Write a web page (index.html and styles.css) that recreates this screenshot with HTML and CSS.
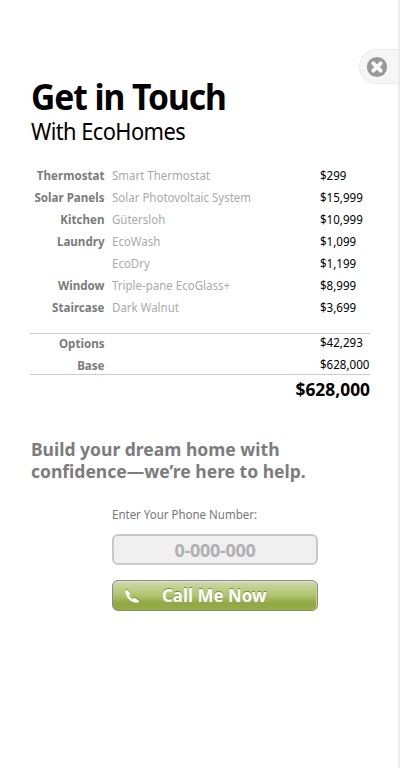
FILE: index.html
```html
<!DOCTYPE html>
<html lang="en">
<head>
<meta charset="utf-8">
<title>Get in Touch</title>
<link rel="stylesheet" href="styles.css">
</head>
<body>
<main class="panel">
  <button class="close" aria-label="Close">
    <svg width="22" height="22" viewBox="0 0 22 22"><circle cx="11" cy="11" r="10.1" fill="#999"/><path d="M7.3 7.3l7.4 7.4M14.7 7.3l-7.4 7.4" stroke="#fafafa" stroke-width="3.8" stroke-linecap="round"/></svg>
  </button>
  <h1 class="title">Get in Touch</h1>
  <p class="subtitle">With EcoHomes</p>
  <dl class="rows">
    <div class="row"><dt>Thermostat</dt><dd class="item">Smart Thermostat</dd><dd class="price">$299</dd></div>
    <div class="row"><dt>Solar Panels</dt><dd class="item">Solar Photovoltaic System</dd><dd class="price">$15,999</dd></div>
    <div class="row"><dt>Kitchen</dt><dd class="item">Gütersloh</dd><dd class="price">$10,999</dd></div>
    <div class="row"><dt>Laundry</dt><dd class="item">EcoWash</dd><dd class="price">$1,099</dd></div>
    <div class="row"><dt></dt><dd class="item">EcoDry</dd><dd class="price">$1,199</dd></div>
    <div class="row"><dt>Window</dt><dd class="item">Triple-pane EcoGlass+</dd><dd class="price">$8,999</dd></div>
    <div class="row"><dt>Staircase</dt><dd class="item">Dark Walnut</dd><dd class="price">$3,699</dd></div>
  </dl>
  <dl class="rows summary">
    <div class="row"><dt>Options</dt><dd class="item"></dd><dd class="price">$42,293</dd></div>
    <div class="row"><dt>Base</dt><dd class="item"></dd><dd class="price">$628,000</dd></div>
  </dl>
  <p class="total">$628,000</p>
  <p class="pitch"><span class="line">Build your dream home with</span><span class="line">confidence—we’re here to help.</span></p>
  <form class="form">
    <label class="label" for="phone">Enter Your Phone Number:</label>
    <input class="phone" id="phone" placeholder="0-000-000">
    <button class="call" type="button">
      <svg class="handset" width="16" height="16" viewBox="0 0 16 16" fill="none" stroke-linecap="round"><path d="M2.300 1.600L6 5" stroke="#768a42" stroke-width="1.500"/><path d="M10.200 9.500L14.500 12.200" stroke="#768a42" stroke-width="1.500"/><path d="M1.300 3.200C1.700 9 7 14.600 12.600 14.900C11 12.800 10.600 12.500 9.700 12C7 10.500 5.200 8.600 4.700 6.300Z" fill="#fff"/><path d="M2.500 3.300L5.100 5.700M10.400 11.200L13.500 13.300" stroke="#fff" stroke-width="2.600"/></svg>
      <span class="call-text">Call Me Now</span>
    </button>
  </form>
</main>
</body>
</html>
```
FILE: styles.css
```css
* { box-sizing: border-box; margin: 0; padding: 0; }
body { background: #fff; font-family: "Noto Sans", sans-serif; }
.panel { position: relative; width: 400px; height: 768px; padding: 76px 30px 0; overflow: hidden; border-right: 2px solid #ebebeb; background: #fff; }
.close { position: absolute; top: 49px; right: -2px; display: flex; align-items: center; width: 41px; height: 35px; padding: 0 0 0 6px; border: 1px solid #ebebeb; border-right: 0; border-radius: 18px 0 0 18px; background: #f6f6f6; }
.close svg { display: block; }
.title { height: 42px; padding-left: 1px; font-size: 36px; line-height: 42px; font-weight: 700; color: #000; letter-spacing: -1.1px; white-space: nowrap; transform: scaleX(.933); transform-origin: 0 0; }
.subtitle { height: 46px; padding-left: 1px; font-size: 23px; line-height: 26px; color: #000; letter-spacing: -.6px; white-space: nowrap; transform: scaleX(.95); transform-origin: 0 0; }
.rows { width: 340px; font-size: 12px; line-height: 24px; white-space: nowrap; }
.row { display: grid; grid-template-columns: 74.500px 208.500px 1fr; column-gap: 7px; height: 22px; }
.row .price { margin-left: -7px; color: #000; transform: scaleX(.965); transform-origin: 0 0; }
.row dt { display: flex; justify-content: flex-end; font-weight: 700; color: #7b7b7b; transform: scaleX(.965); transform-origin: 100% 0; }
.row .item { color: #aaa; transform: scaleX(.957); transform-origin: 0 0; }
.summary { height: 42px; margin-top: 15px; border-top: 1px solid #ccc; border-bottom: 1px solid #ccc; line-height: 20px; }
.summary .price { line-height: 18px; }
.total { width: 340px; text-align: right; font-size: 18px; line-height: 29px; font-weight: 700; color: #000; transform: scaleX(.965); transform-origin: 100% 0; }
.pitch { height: 64px; margin-top: 34px; padding-left: 1px; font-size: 18px; line-height: 22px; font-weight: 700; color: #7c7c7c; white-space: nowrap; transform: scaleX(.973); transform-origin: 0 0; }
.line { display: block; }
.form { display: flex; flex-direction: column; width: 206px; margin-left: 82px; }
.label { height: 32px; font-size: 12px; line-height: 26px; color: #777; transform: scaleX(.957); transform-origin: 0 0; }
.phone { height: 31px; border: 2px solid #c9c9c9; border-radius: 6px; background: #f0f0f0; text-align: center; font: 700 18px/27px "Noto Sans", sans-serif; letter-spacing: -.3px; }
.phone::placeholder { color: #b0b0b0; opacity: 1; }
.call { display: flex; align-items: center; height: 31px; margin-top: 15px; padding-left: 11px; border: 1px solid #8a8a86; border-radius: 6px; background: linear-gradient(#d0daaa, #b0c36c 50%, #93a844 75%, #94ab46); box-shadow: inset 0 1px #e0e7c8, inset -1px 0 #c8d19f; color: #fff; font: 700 18px/27px "Noto Sans", sans-serif; text-shadow: 0 -1px #788a45; }
.call-text { margin-left: 22px; white-space: nowrap; transform: scaleX(.94); transform-origin: 0 0; }
```
